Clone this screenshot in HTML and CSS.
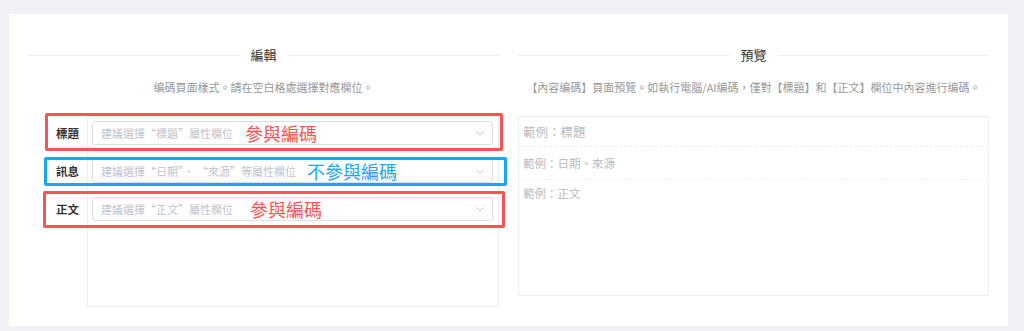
FILE: index.html
```html
<!DOCTYPE html>
<html lang="zh-Hant">
<head>
  <meta charset="UTF-8">
  <meta name="viewport" content="width=device-width, initial-scale=1">
  <title>內容編碼</title>
  <link rel="stylesheet" href="styles.css">
</head>
<body>
  <div class="card">
    <div class="panel">
      <div class="divider"><span>編輯</span></div>
      <div class="hint">编碼頁面樣式。請在空白格處選擇對應欄位。</div>
      <div class="form">
        <div class="labels">
          <div class="label">標題</div>
          <div class="label">訊息</div>
          <div class="label">正文</div>
        </div>
        <div class="box">
          <div class="select">
            <span class="placeholder">建議選擇“標題”屬性欄位</span>
            <span class="note red" style="margin-left: 12px">參與編碼</span>
            <svg class="arrow" width="8" height="5" viewBox="0 0 8 5"><path d="M0.5 0.5L4 4L7.5 0.5" fill="none" stroke="#c0c4cc" stroke-width="1"/></svg>
          </div>
          <div class="select">
            <span class="placeholder">建議選擇“日期”、 “來源”等屬性欄位</span>
            <span class="note blue" style="margin-left: 11px">不參與編碼</span>
            <svg class="arrow" width="8" height="5" viewBox="0 0 8 5"><path d="M0.5 0.5L4 4L7.5 0.5" fill="none" stroke="#c0c4cc" stroke-width="1"/></svg>
          </div>
          <div class="select">
            <span class="placeholder">建議選擇“正文”屬性欄位</span>
            <span class="note red" style="margin-left: 17px">參與編碼</span>
            <svg class="arrow" width="8" height="5" viewBox="0 0 8 5"><path d="M0.5 0.5L4 4L7.5 0.5" fill="none" stroke="#c0c4cc" stroke-width="1"/></svg>
          </div>
        </div>
        <!-- annotation frames drawn over the rows -->
        <div class="frame frame-red frame-1"></div>
        <div class="frame frame-blue frame-2"></div>
        <div class="frame frame-red frame-3"></div>
      </div>
    </div>

    <div class="panel">
      <div class="divider"><span>預覽</span></div>
      <div class="hint">【內容编碼】頁面預覽。如執行電腦/AI编碼，僅對【標題】和【正文】欄位中內容進行编碼。</div>
      <div class="preview">
        <div class="preview-row title">範例：標題</div>
        <div class="preview-row info">範例：日期、來源</div>
        <div class="preview-row body-text">範例：正文</div>
      </div>
    </div>
  </div>
</body>
</html>
```

FILE: styles.css
```css
:root {
  --page-bg: #f0f2f5;
  --line: #ebeef5;
  --border: #dcdfe6;
  --placeholder: #c0c4cc;
  --text: #303133;
  --muted: #999;
  --red: #f55555;
  --blue: #1aa6f2;
}

html, body {
  margin: 0;
  padding: 0;
}

body {
  background: var(--page-bg);
  font-family: "Noto Sans CJK TC", "Noto Sans", "Liberation Sans", sans-serif;
  color: var(--text);
}

.card {
  margin: 14px 0 0 9px;
  width: 999px;
  height: 312px;
  box-sizing: border-box;
  padding: 31px 19px 19px;
  background: #fff;
  display: flex;
  gap: 19px;
}

.panel {
  width: 471px;
}

.divider {
  display: flex;
  align-items: center;
  height: 20px;
  font-size: 13px;
  color: #333;
}

.divider::before,
.divider::after {
  content: "";
  flex: 1;
  border-top: 1px solid #eeeeee;
}

.divider span {
  padding: 0 11px;
  line-height: 20px;
}

.hint {
  margin-top: 13px;
  line-height: 18px;
  font-size: 11px;
  color: var(--muted);
  text-align: center;
  white-space: nowrap;
}

/* left: form */
.form {
  position: relative;
  margin-top: 20px;
  display: flex;
  height: 191px;
}

.labels {
  width: 59px;
  padding-top: 5px;
  display: flex;
  flex-direction: column;
  gap: 14px;
}

.label {
  height: 24px;
  line-height: 24px;
  padding-right: 8px;
  text-align: right;
  font-size: 11.5px;
  font-weight: 700;
  color: #333;
}

.box {
  flex: 1;
  box-sizing: border-box;
  border: 1px solid var(--line);
  padding: 4px 5px 0 4px;
  display: flex;
  flex-direction: column;
  gap: 14px;
}

.select {
  height: 24px;
  box-sizing: border-box;
  border: 1px solid var(--border);
  border-radius: 3px;
  padding: 0 8px;
  display: flex;
  align-items: center;
  white-space: pre;
}

.placeholder {
  font-size: 11px;
  color: var(--placeholder);
}

.note {
  font-size: 18px;
  line-height: 24px;
}

.note.red {
  color: var(--red);
}

.note.blue {
  color: var(--blue);
}

.arrow {
  margin-left: auto;
}

.frame {
  position: absolute;
  box-sizing: border-box;
  border: 3px solid;
  border-radius: 2px;
  pointer-events: none;
}

.frame-red {
  border-color: var(--red);
}

.frame-blue {
  border-color: var(--blue);
}

.frame-1 {
  left: 17px;
  top: -3px;
  width: 458px;
  height: 38px;
}

.frame-2 {
  left: 16px;
  top: 41px;
  width: 463px;
  height: 29px;
}

.frame-3 {
  left: 15px;
  top: 75px;
  width: 462px;
  height: 37px;
}

/* right: preview */
.preview {
  margin-top: 20px;
  height: 180px;
  box-sizing: border-box;
  border: 1px solid var(--line);
  color: #bbb;
}

.preview-row {
  padding-left: 4px;
}

.preview-row.title {
  height: 29px;
  line-height: 29px;
  font-size: 12.5px;
  border-bottom: 1px dashed var(--line);
}

.preview-row.info {
  height: 32px;
  line-height: 32px;
  font-size: 11.5px;
  border-bottom: 1px dashed var(--line);
}

.preview-row.body-text {
  padding-top: 4px;
  line-height: 18px;
  font-size: 11.5px;
}
```
